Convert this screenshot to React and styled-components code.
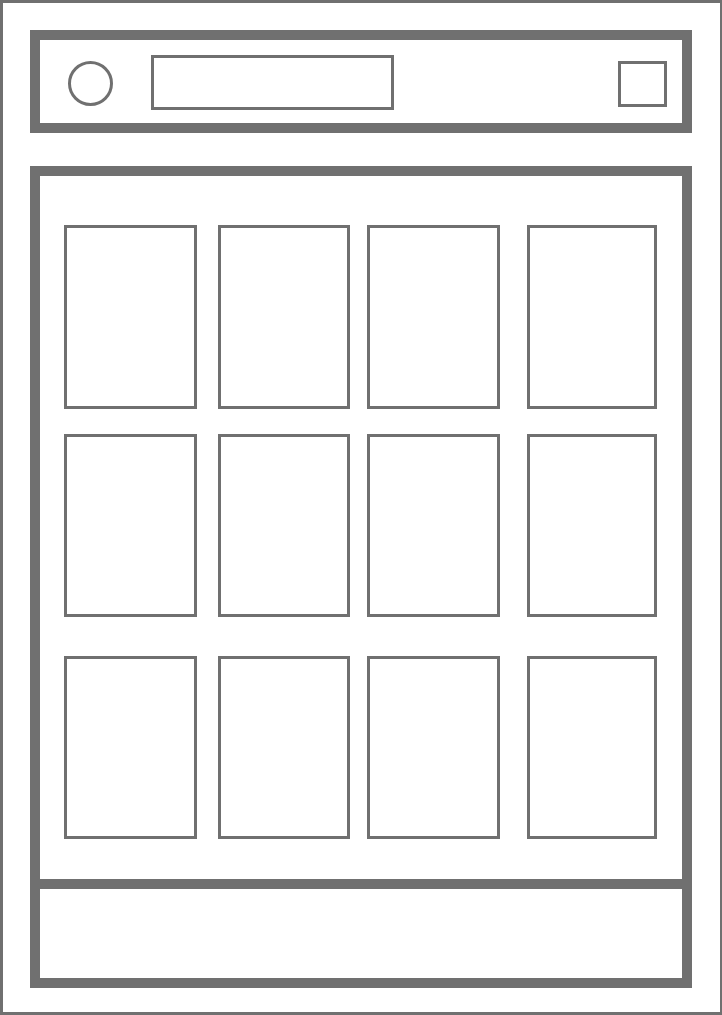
import React from "react";
import styled, { createGlobalStyle } from "styled-components";

const GRAY = "#707070";

const Global = createGlobalStyle`
  html, body { margin: 0; padding: 0; background: #ffffff; }
  body { font-family: "Liberation Sans", Arial, sans-serif; }
  *, *::before, *::after { box-sizing: border-box; }
`;

const Frame = styled.div`
  width: 722px;
  height: 1015px;
  border: 3px solid ${GRAY};
  border-right-width: 2px;
  padding: 27px 0 0 27px;
  display: flex;
  flex-direction: column;
  background: #fff;
`;

const Header = styled.header`
  width: 662px;
  height: 103px;
  border: 10px solid ${GRAY};
  display: flex;
  align-items: flex-start;
`;

const Avatar = styled.div`
  width: 45px;
  height: 45px;
  margin: 21px 0 0 28px;
  border: 3px solid ${GRAY};
  border-radius: 50%;
`;

const SearchBox = styled.div`
  width: 243px;
  height: 55px;
  margin: 15px 0 0 38px;
  border: 3px solid ${GRAY};
`;

const MenuButton = styled.div`
  width: 49px;
  height: 46px;
  margin: 21px 15px 0 auto;
  border: 3px solid ${GRAY};
`;

const Main = styled.main`
  width: 662px;
  height: 822px;
  margin-top: 33px;
  border: 10px solid ${GRAY};
  display: flex;
  flex-direction: column;
`;

const Gallery = styled.section`
  flex: 1;
  display: flex;
  flex-direction: column;
  padding: 0 0 0 24px;
`;

const Row = styled.div`
  display: flex;
  margin-top: ${(p) => p.$top}px;
`;

const Card = styled.div`
  width: ${(p) => p.$w}px;
  height: ${(p) => p.$h}px;
  margin-left: ${(p) => p.$ml}px;
  border: 3px solid ${GRAY};
  flex-shrink: 0;
`;

const Footer = styled.footer`
  height: 99px;
  border-top: 10px solid ${GRAY};
`;

const cols = [
  { w: 133, ml: 0 },
  { w: 132, ml: 21 },
  { w: 133, ml: 17 },
  { w: 130, ml: 27 },
];

const rows = [
  { top: 49, h: 184 },
  { top: 25, h: 183 },
  { top: 39, h: 183 },
];

export default function App() {
  return (
    <>
      <Global />
      <Frame>
        <Header>
          <Avatar />
          <SearchBox />
          <MenuButton />
        </Header>
        <Main>
          <Gallery>
            {rows.map((r, i) => (
              <Row key={i} $top={r.top}>
                {cols.map((c, j) => (
                  <Card key={j} $w={c.w} $h={r.h} $ml={c.ml} />
                ))}
              </Row>
            ))}
          </Gallery>
          <Footer />
        </Main>
      </Frame>
    </>
  );
}
